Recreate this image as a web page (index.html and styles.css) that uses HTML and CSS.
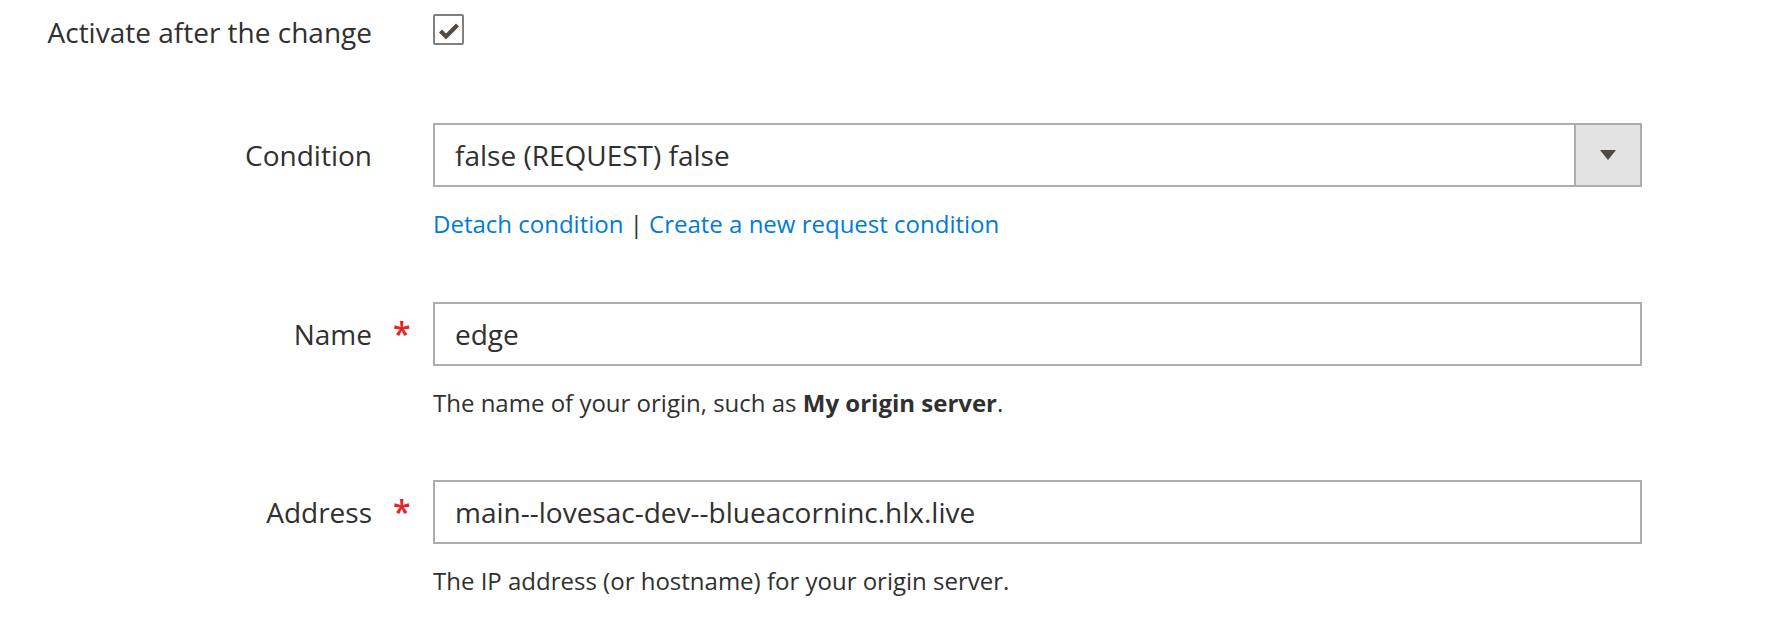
FILE: index.html
```html
<!DOCTYPE html>
<html lang="en">
<head>
<meta charset="utf-8">
<title>Origin</title>
<link rel="stylesheet" href="styles.css">
</head>
<body>
<form class="form">
  <div class="field">
    <div class="label"><span class="label-text">Activate after the change</span><span class="star"></span></div>
    <div class="control">
      <span class="checkbox">
        <svg width="31" height="31" viewBox="0 0 31 31"><path d="M7.5 17 L13 22.5 L24.5 11" fill="none" stroke="#514943" stroke-width="4.2" stroke-linecap="butt" stroke-linejoin="miter"/></svg>
      </span>
    </div>
  </div>

  <div class="field">
    <div class="label"><span class="label-text">Condition</span><span class="star"></span></div>
    <div class="control">
      <div class="select">
        <span class="select-value">false (REQUEST) false</span>
        <span class="select-btn"><svg width="16" height="10" viewBox="0 0 16 10"><path d="M0 0 H16 L8 10 Z" fill="#514943"/></svg></span>
      </div>
      <div class="note"><a class="link" href="#">Detach condition</a> | <a class="link" href="#">Create a new request condition</a></div>
    </div>
  </div>

  <div class="field">
    <div class="label"><span class="label-text">Name</span><span class="star req">*</span></div>
    <div class="control">
      <div class="input">edge</div>
      <div class="note">The name of your origin, such as <strong>My origin server</strong>.</div>
    </div>
  </div>

  <div class="field">
    <div class="label"><span class="label-text">Address</span><span class="star req">*</span></div>
    <div class="control">
      <div class="input">main--lovesac-dev--blueacorninc.hlx.live</div>
      <div class="note">The IP address (or hostname) for your origin server.</div>
    </div>
  </div>
</form>
</body>
</html>
```

FILE: styles.css
```css
html, body {
  margin: 0;
  padding: 0;
  background: #ffffff;
}
body {
  font-family: "Open Sans", "Noto Sans", sans-serif;
  color: #303030;
}
.form {
  display: flex;
  flex-direction: column;
  gap: 59px;
}
.field {
  display: flex;
  align-items: flex-start;
}
.label {
  width: 433px;
  flex: none;
  display: flex;
  justify-content: flex-end;
  font-size: 28px;
  line-height: 64px;
  color: #303030;
}
.star {
  width: 61px;
  flex: none;
  box-sizing: border-box;
  padding-left: 21px;
  color: #e22626;
  font-size: 32px;
  font-weight: 600;
}
.control {
  width: 1209px;
  flex: none;
}
.checkbox {
  display: block;
  margin-top: 14px;
  width: 31px;
  height: 31px;
  box-sizing: border-box;
  border: 2px solid #808080;
  border-radius: 2px;
  background: #fff;
  position: relative;
}
.checkbox svg {
  position: absolute;
  left: -2px;
  top: -2px;
}
.select {
  display: flex;
  height: 64px;
  box-sizing: border-box;
  border: 2px solid #adadad;
  background: #fff;
}
.select-value {
  flex: 1;
  padding-left: 20px;
  font-size: 28px;
  line-height: 60px;
  color: #303030;
}
.select-btn {
  width: 64px;
  flex: none;
  border-left: 2px solid #adadad;
  background: #e3e3e3;
  display: flex;
  align-items: center;
  justify-content: center;
}
.input {
  height: 64px;
  box-sizing: border-box;
  border: 2px solid #adadad;
  padding-left: 20px;
  font-size: 28px;
  line-height: 60px;
  color: #303030;
  background: #fff;
}
.note {
  margin-top: 19px;
  font-size: 24px;
  line-height: 36.5px;
  color: #303030;
}
.note strong {
  font-weight: 700;
}
.link {
  color: #007bdb;
  text-decoration: none;
}
```
